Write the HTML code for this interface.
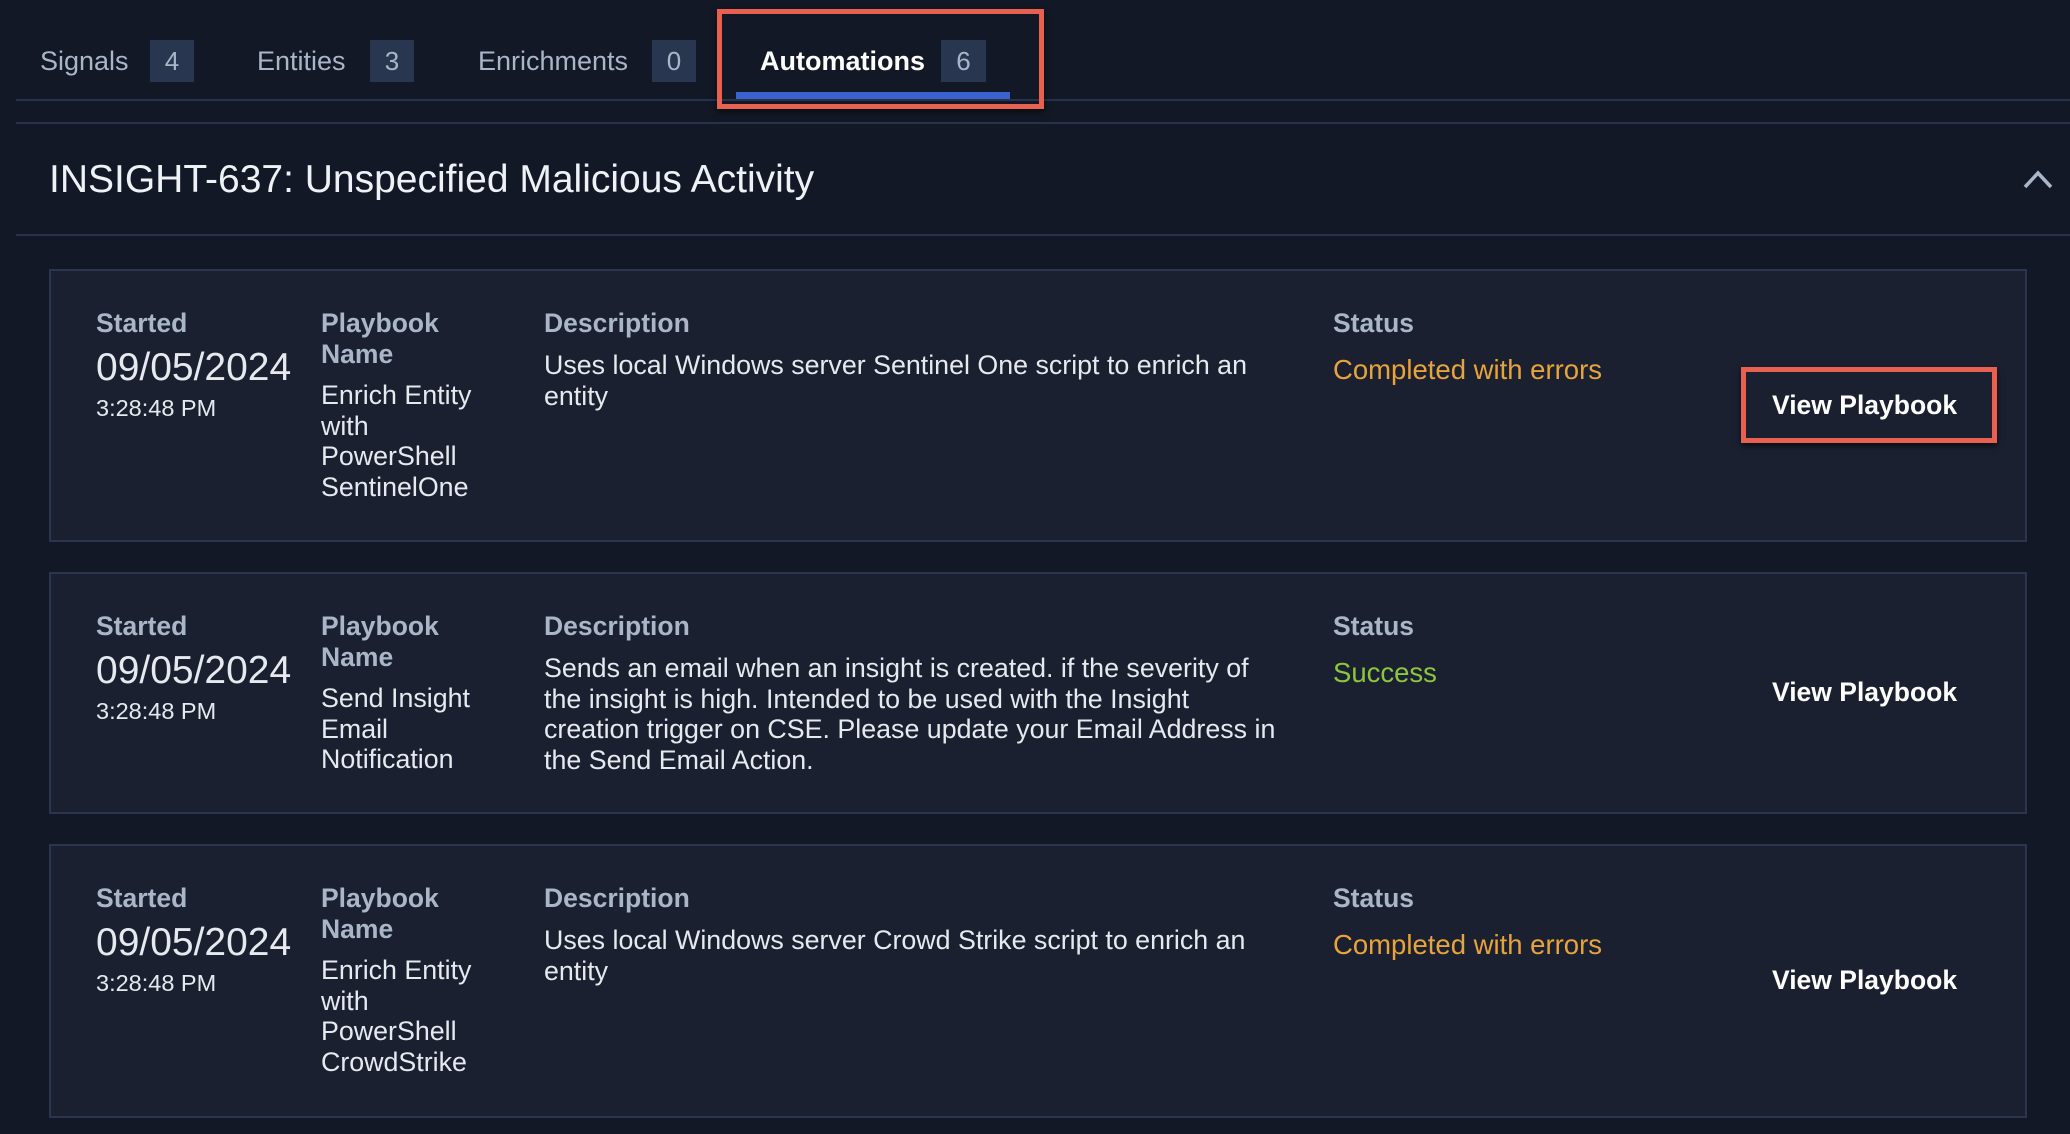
<!DOCTYPE html>
<html><head><meta charset="utf-8"><style>
*{margin:0;padding:0;box-sizing:border-box}
body{width:2070px;height:1134px;background:#131826;font-family:"Liberation Sans",sans-serif;position:relative;overflow:hidden;color:#e6e9ee}
.a{position:absolute;white-space:nowrap}
.tab{font-size:27px;color:#a9b6c8;top:44px;line-height:34px}
.badge{position:absolute;top:40px;height:42px;background:#283650;color:#a9b6c8;font-size:26px;line-height:42px;text-align:center}
.line{position:absolute;left:16px;right:0;height:2px;background:#263349}
.card{position:absolute;left:49px;width:1978px;background:#1a2030;border:2px solid #2a3550}
.lbl{font-size:26.5px;font-weight:bold;color:#a9b6c8;line-height:31px}
.val{font-size:26.8px;line-height:30.7px;color:#e6e9ee}
.date{font-size:39px;line-height:42px}
.time{font-size:23.5px;line-height:30px}
.btn{font-size:26.5px;font-weight:bold;color:#fff}
</style></head><body>
<div class="a tab" style="left:40px">Signals</div><div class="badge" style="left:150px;width:44px">4</div>
<div class="a tab" style="left:257px">Entities</div><div class="badge" style="left:370px;width:44px">3</div>
<div class="a tab" style="left:478px">Enrichments</div><div class="badge" style="left:652px;width:44px">0</div>
<div class="a tab" style="left:760px;color:#fff;font-weight:bold">Automations</div><div class="badge" style="left:941px;width:45px">6</div>
<div class="line" style="top:99px"></div>
<div style="position:absolute;left:736px;top:92px;width:274px;height:7px;background:#3a63cf"></div>
<div style="position:absolute;left:717px;top:9px;width:327px;height:100px;border:5px solid #e8604f;box-shadow:0 3px 6px rgba(0,0,0,.6)"></div>
<div class="line" style="top:122px"></div>
<div class="a" style="left:49px;top:156px;font-size:39px;line-height:48px;color:#eef1f5">INSIGHT-637: Unspecified Malicious Activity</div>
<svg class="a" style="left:2022px;top:168px" width="32" height="22"><path d="M3 19 L16 5 L29 19" stroke="#a9b6c8" stroke-width="3.5" fill="none"/></svg>
<div class="line" style="top:234px"></div>

<div class="card" style="top:269px;height:273px">
<div class="a lbl" style="left:45px;top:37px">Started</div>
<div class="a val date" style="left:45px;top:76px">09/05/2024</div>
<div class="a val time" style="left:45px;top:122px">3:28:48 PM</div>
<div class="a lbl" style="left:270px;top:37px">Playbook<br>Name</div>
<div class="a val" style="left:270px;top:109px">Enrich Entity<br>with<br>PowerShell<br>SentinelOne</div>
<div class="a lbl" style="left:493px;top:37px">Description</div>
<div class="a val" style="left:493px;top:79px">Uses local Windows server Sentinel One script to enrich an<br>entity</div>
<div class="a lbl" style="left:1282px;top:37px">Status</div>
<div class="a val" style="left:1282px;top:84px;color:#e8a33a;font-size:27.5px">Completed with errors</div>
<div class="a" style="left:1690px;top:96px;width:256px;height:76px;border:5px solid #e8604f;box-shadow:0 3px 6px rgba(0,0,0,.6)"></div>
<div class="a btn" style="left:1721px;top:119px">View Playbook</div>
</div>

<div class="card" style="top:572px;height:242px">
<div class="a lbl" style="left:45px;top:37px">Started</div>
<div class="a val date" style="left:45px;top:76px">09/05/2024</div>
<div class="a val time" style="left:45px;top:122px">3:28:48 PM</div>
<div class="a lbl" style="left:270px;top:37px">Playbook<br>Name</div>
<div class="a val" style="left:270px;top:109px">Send Insight<br>Email<br>Notification</div>
<div class="a lbl" style="left:493px;top:37px">Description</div>
<div class="a val" style="left:493px;top:79px">Sends an email when an insight is created. if the severity of<br>the insight is high. Intended to be used with the Insight<br>creation trigger on CSE. Please update your Email Address in<br>the Send Email Action.</div>
<div class="a lbl" style="left:1282px;top:37px">Status</div>
<div class="a val" style="left:1282px;top:84px;color:#8cc63f;font-size:27.5px">Success</div>
<div class="a btn" style="left:1721px;top:103px">View Playbook</div>
</div>

<div class="card" style="top:844px;height:274px">
<div class="a lbl" style="left:45px;top:37px">Started</div>
<div class="a val date" style="left:45px;top:76px">09/05/2024</div>
<div class="a val time" style="left:45px;top:122px">3:28:48 PM</div>
<div class="a lbl" style="left:270px;top:37px">Playbook<br>Name</div>
<div class="a val" style="left:270px;top:109px">Enrich Entity<br>with<br>PowerShell<br>CrowdStrike</div>
<div class="a lbl" style="left:493px;top:37px">Description</div>
<div class="a val" style="left:493px;top:79px">Uses local Windows server Crowd Strike script to enrich an<br>entity</div>
<div class="a lbl" style="left:1282px;top:37px">Status</div>
<div class="a val" style="left:1282px;top:84px;color:#e8a33a;font-size:27.5px">Completed with errors</div>
<div class="a btn" style="left:1721px;top:119px">View Playbook</div>
</div>
</body></html>
